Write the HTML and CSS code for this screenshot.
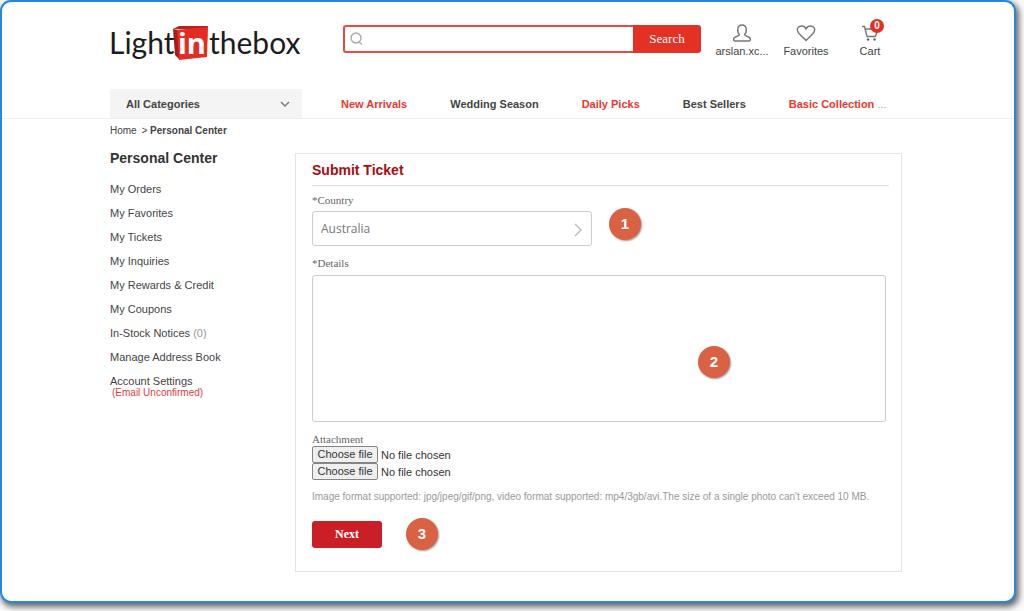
FILE: index.html
```
<!DOCTYPE html>
<html lang="en">
<head>
  <meta charset="UTF-8" />
  <meta name="viewport" content="width=device-width, initial-scale=1.0" />
  <title>Submit Ticket - Light in the box</title>
  <link rel="stylesheet" href="styles.css">
</head>
<body>
  <div class="frame">
    <!-- Header -->
    <header class="header">
      <a href="#" class="logo">
        <svg width="200" height="48" viewBox="-4 0 200 48" role="img" aria-label="Light in the box">
          <path d="M63 9 L69 6 L98 6 L97 10 Z" fill="#b8231b" />
          <path d="M63 9 L68 10 L70 40 L65 35 Z" fill="#a51d17" />
          <path d="M67 10 L98 7 L97 37 L69 40 Z" fill="#e32d24" />
          <text x="-1" y="34" class="logo-text">Light</text>
          <text x="68" y="34" class="logo-in">in</text>
          <text x="99" y="34" class="logo-text">thebox</text>
        </svg>
      </a>
      <form class="search">
        <svg class="search-icon" width="14" height="14" viewBox="0 0 14 14">
          <circle cx="6" cy="6" r="5" />
          <path d="M9 10 L12 12.500" />
        </svg>
        <input type="text" class="search-input" aria-label="Search products" />
        <button type="button" class="search-button">Search</button>
      </form>
      <nav class="tools">
        <a href="#" class="tool">
          <svg width="20" height="18" viewBox="0 0 20 18">
            <path d="M7.500 10.500 C5 8.500 4.500 1 10 1 C15.500 1 15 8.500 12.500 10.500 C12.500 12.500 18 12 18.300 15 Q18.500 17 17 17 H3 Q1.500 17 1.700 15 C2 12 7.500 12.500 7.500 10.500 Z" />
          </svg>
          <span>arslan.xc...</span>
        </a>
        <a href="#" class="tool">
          <svg width="20" height="18" viewBox="0 0 20 18">
            <path d="M10 16.500 L3 9.500 C-0.500 5.500 2 2 5.500 2 C8 2 9.300 3.500 10 4.800 C10.700 3.500 12 2 14.500 2 C18 2 20.500 5.500 17 9.500 Z" />
          </svg>
          <span>Favorites</span>
        </a>
        <a href="#" class="tool">
          <svg width="20" height="18" viewBox="0 0 20 18">
            <path d="M2 2.500 H4.500 L7 12.500 H15.500 L18 5 H5.200" />
            <circle cx="8" cy="15.500" r="1.200" class="wheel" />
            <circle cx="14.500" cy="15.500" r="1.200" class="wheel" />
          </svg>
          <span class="cart-count">0</span>
          <span>Cart</span>
        </a>
      </nav>
    </header>

    <!-- Categories -->
    <nav class="menu">
      <button type="button" class="categories">
        All Categories
        <svg width="10" height="6" viewBox="0 0 10 6"><path d="M1 1 L5 5 L9 1" /></svg>
      </button>
      <a href="#" class="hot">New Arrivals</a>
      <a href="#">Wedding Season</a>
      <a href="#" class="hot">Daily Picks</a>
      <a href="#">Best Sellers</a>
      <a href="#" class="hot">Basic Collection <span class="more">...</span></a>
    </nav>

    <div class="breadcrumb">
      <a href="#">Home</a> <span class="arrow">&gt;</span> <strong>Personal Center</strong>
    </div>

    <div class="content">
      <!-- Sidebar -->
      <aside class="sidebar">
        <h2>Personal Center</h2>
        <ul>
          <li><a href="#">My Orders</a></li>
          <li><a href="#">My Favorites</a></li>
          <li><a href="#">My Tickets</a></li>
          <li><a href="#">My Inquiries</a></li>
          <li><a href="#">My Rewards &amp; Credit</a></li>
          <li><a href="#">My Coupons</a></li>
          <li><a href="#">In-Stock Notices <span class="count">(0)</span></a></li>
          <li><a href="#">Manage Address Book</a></li>
          <li><a href="#">Account Settings</a><a href="#" class="unconfirmed">(Email Unconfirmed)</a></li>
        </ul>
      </aside>

      <!-- Ticket form -->
      <main class="panel">
        <h1>Submit Ticket</h1>
        <form class="ticket">
          <label for="country">*Country</label>
          <div class="select-box">
            <select id="country">
              <option>Australia</option>
            </select>
            <svg width="8" height="14" viewBox="0 0 8 14"><path d="M1 1 L7 7 L1 13" /></svg>
            <span class="step step-country">1</span>
          </div>

          <label for="details">*Details</label>
          <div class="details-box">
            <textarea id="details"></textarea>
            <span class="step step-details">2</span>
          </div>

          <span class="attachment">Attachment</span>
          <div class="file">
            <input type="file" id="file1" />
            <label for="file1">Choose file</label>
            <span>No file chosen</span>
          </div>
          <div class="file">
            <input type="file" id="file2" />
            <label for="file2">Choose file</label>
            <span>No file chosen</span>
          </div>

          <p class="note">Image format supported: jpg/jpeg/gif/png, video format supported: mp4/3gb/avi.The size of a single photo can't exceed 10 MB.</p>

          <div class="submit-row">
            <button type="button" class="next">Next</button>
            <span class="step">3</span>
          </div>
        </form>
      </main>
    </div>
  </div>
</body>
</html>
```
FILE: styles.css
```
* {
  box-sizing: border-box;
}
body {
  margin: 0;
  padding: 0 8px 9px 0;
  background: #fbfbfb;
  color: #444;
  font-family: "Liberation Sans", Arial, sans-serif;
  font-size: 11px;
  line-height: 14px;
}
a {
  color: inherit;
  text-decoration: none;
}
button,
input,
select,
textarea {
  font: inherit;
  color: inherit;
}
svg {
  fill: none;
  stroke: #777;
  stroke-width: 1.4;
}
.frame {
  background: #fff;
  border: 2px solid #2488de;
  border-radius: 11px;
  box-shadow: 2px 3px 6px 1px rgba(0,0,0,0.6);
  padding-bottom: 29px;
}

/* Header */
.header {
  display: flex;
  align-items: flex-start;
  padding: 18px 112px 0 104px;
  height: 87px;
}
.logo {
  width: 237px;
}
.logo svg {
  display: block;
  stroke: none;
}
.logo-text {
  font-family: Lato, sans-serif;
  font-size: 30px;
  fill: #1c1c1c;
}
.logo-in {
  font-family: "Open Sans", sans-serif;
  font-size: 29px;
  font-weight: bold;
  fill: #fff;
}
.search {
  position: relative;
  display: flex;
  flex: 1;
  height: 28px;
  margin-top: 5px;
}
.search-icon {
  position: absolute;
  left: 7px;
  top: 7px;
  stroke: #aaa;
}
.search-input {
  flex: 1;
  min-width: 0;
  border: 2px solid #ea4a40;
  border-right: 0;
  border-radius: 3px 0 0 3px;
  padding: 0 8px 0 26px;
  background: #fff;
}
.search-button {
  width: 68px;
  border: 0;
  border-radius: 0 3px 3px 0;
  background: #e33225;
  color: #fff;
  font-family: "Liberation Serif", "Times New Roman", serif;
  font-size: 13px;
}
.tools {
  display: flex;
  margin-left: 9px;
}
.tool {
  position: relative;
  display: flex;
  flex-direction: column;
  align-items: center;
  gap: 2px;
  width: 64px;
  padding-top: 4px;
}
.tool .wheel {
  fill: #666;
  stroke: none;
}
.cart-count {
  position: absolute;
  left: 32px;
  top: -1px;
  width: 14px;
  border-radius: 7px;
  background: #e33225;
  color: #fff;
  font-size: 10px;
  font-weight: bold;
  text-align: center;
}

/* Menu */
.menu {
  display: flex;
  align-items: center;
  gap: 43px;
  padding: 0 112px 0 108px;
  border-bottom: 1px solid #eee;
  font-weight: bold;
  white-space: nowrap;
}
.categories {
  display: flex;
  align-items: center;
  justify-content: space-between;
  width: 192px;
  height: 29px;
  margin-right: -4px;
  padding: 0 12px 0 16px;
  border: 0;
  background: #f4f4f4;
  font-weight: bold;
}
.hot {
  color: #e8382c;
}
.more {
  color: #aaa;
  font-weight: normal;
}
.breadcrumb {
  padding: 5px 108px 0;
  font-size: 10px;
}
.arrow {
  margin-left: 2px;
}

/* Content */
.content {
  display: flex;
  align-items: flex-start;
  padding: 0 112px 0 108px;
}
.sidebar {
  width: 185px;
}
.sidebar h2 {
  margin: 11px 0 10px;
  font-size: 14px;
  line-height: 18px;
  color: #333;
}
.sidebar ul {
  margin: 0;
  padding: 0;
  list-style: none;
}
.sidebar li {
  padding: 5px 0;
}
.count {
  color: #999;
}
.unconfirmed {
  display: block;
  padding-left: 2px;
  color: #e0403c;
  font-size: 10px;
  line-height: 10px;
}
.panel {
  flex: 1;
  min-width: 0;
  margin-top: 15px;
  padding: 7px 12px 21px 16px;
  border: 1px solid #e4e4e4;
}
.panel h1 {
  margin: 0 0 7px;
  padding-bottom: 6px;
  border-bottom: 1px solid #e0e0e0;
  color: #a60d12;
  font-size: 14px;
  line-height: 18px;
}
.ticket {
  display: flex;
  flex-direction: column;
  padding-right: 3px;
}
.ticket > label,
.attachment {
  font-family: "Liberation Serif", "Times New Roman", serif;
  color: #666;
}
.select-box {
  position: relative;
  width: 280px;
  margin: 4px 0 10px;
}
.select-box select {
  display: block;
  width: 100%;
  height: 35px;
  padding: 0 8px;
  border: 1px solid #ccc;
  border-radius: 3px;
  background: #fff;
  color: #777;
  font-family: "Open Sans", sans-serif;
  font-size: 12px;
  appearance: none;
}
.select-box svg {
  position: absolute;
  right: 10px;
  top: 12px;
  stroke: #bbb;
  pointer-events: none;
}
.details-box {
  position: relative;
  margin: 5px 0 10px;
}
.details-box textarea {
  display: block;
  width: 100%;
  height: 147px;
  padding: 8px;
  border: 1px solid #ccc;
  border-radius: 3px;
  background: #fff;
  resize: none;
}
.file {
  position: relative;
  display: flex;
  align-items: center;
  gap: 3px;
  color: #333;
}
.file input {
  position: absolute;
  width: 66px;
  height: 17px;
  margin: 0;
  opacity: 0;
}
.file label {
  width: 66px;
  border: 1px solid #858585;
  border-radius: 2px;
  background: #efefef;
  line-height: 15px;
  text-align: center;
}
.note {
  margin: 10px 0 14px;
  color: #999;
  font-size: 10px;
}
.submit-row {
  display: flex;
  align-items: center;
  gap: 24px;
}
.next {
  width: 70px;
  height: 27px;
  border: 0;
  border-radius: 3px;
  background: #cb1f28;
  color: #fff;
  font-family: "Liberation Serif", "Times New Roman", serif;
  font-size: 12px;
  font-weight: bold;
}

/* Numbered steps */
.step {
  width: 32px;
  height: 32px;
  border-radius: 50%;
  background: #d96244;
  box-shadow: 1px 1px 2px rgba(0,0,0,0.4);
  color: #fff;
  font-size: 15px;
  font-weight: bold;
  line-height: 32px;
  text-align: center;
}
.step-country {
  position: absolute;
  left: 297px;
  top: -3px;
}
.step-details {
  position: absolute;
  right: 156px;
  top: 71px;
}
```
